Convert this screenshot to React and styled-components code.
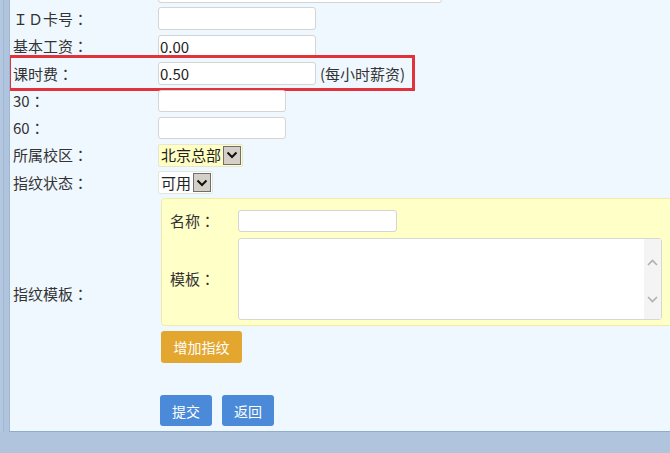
import React from "react";
import styled, { createGlobalStyle } from "styled-components";

const Global = createGlobalStyle`
  html, body { margin: 0; padding: 0; overflow: hidden; }
  body {
    background: #b0c4de;
    font-family: "Noto Sans CJK SC", "Liberation Sans", sans-serif;
    color: #333;
  }
`;

const Page = styled.div`
  width: 670px;
  height: 453px;
  background: #b0c4de;
  display: flex;
  flex-direction: column;
  overflow: hidden;
`;

const Frame = styled.div`
  display: flex;
  height: 432px;
  padding-left: 9px;
  box-shadow: inset 3px 0 0 #b3c8e0, inset 4px 0 0 #9fb7d3;
`;

const Panel = styled.div`
  flex: 1;
  background: #f0f8ff;
  border-left: 1px solid #9db6d2;
  border-bottom: 1px solid #8eaccb;
  overflow: hidden;
  position: relative;
`;

const Form = styled.div`
  display: flex;
  flex-direction: column;
  margin-top: -22px;
`;

const Row = styled.div`
  position: relative;
  display: grid;
  grid-template-columns: 148px 1fr;
  align-items: center;
  height: 27.3px;
`;

const Label = styled.div`
  padding-left: 3px;
  font-size: 15px;
  line-height: 20px;
  color: #333;
  white-space: nowrap;
`;

const Colon = styled.span`
  font-family: "Noto Sans CJK TC", "Noto Sans CJK SC", sans-serif;
`;

const Field = styled.div`
  display: flex;
  align-items: center;
  gap: 4px;
`;

const Input = styled.input`
  box-sizing: border-box;
  width: ${(p) => p.$w}px;
  height: ${(p) => p.$h || 23}px;
  border: 1px solid #d4d4d4;
  border-radius: 3px;
  background: #fff;
  padding: 0 1px;
  font-family: "Noto Sans CJK SC", "Liberation Sans", sans-serif;
  font-size: 15px;
  color: #222;
  outline: none;
`;

const Hint = styled.span`
  font-size: 15px;
  line-height: 20px;
  color: #333;
`;

const Highlight = styled.div`
  position: absolute;
  left: -2px;
  top: -5px;
  width: 407px;
  height: 36px;
  box-sizing: border-box;
  border: 3px solid #e2323a;
  pointer-events: none;
`;

const SelectBox = styled.div`
  box-sizing: border-box;
  display: inline-flex;
  align-items: center;
  height: 23px;
  padding: 0 1px 0 2px;
  gap: 2px;
  background: ${(p) => p.$bg};
  border: 1px solid #e6e6d8;
  border-radius: 2px;
  font-size: 15px;
  color: #222;
  line-height: 20px;
`;

const ArrowBtn = styled.span`
  box-sizing: border-box;
  width: 18px;
  height: 19px;
  background: #d4d0c8;
  border: 1px solid #6f6f6f;
  display: inline-flex;
  align-items: center;
  justify-content: center;
`;

const Chevron = () => (
  <svg width="12" height="8" viewBox="0 0 12 8">
    <path d="M1.5 1.5 L6 6 L10.5 1.5" fill="none" stroke="#111" strokeWidth="2" />
  </svg>
);

const FingerRow = styled.div`
  display: grid;
  grid-template-columns: 148px 1fr;
  align-items: center;
  min-height: 196px;
`;

const FingerField = styled.div`
  display: flex;
  flex-direction: column;
  align-items: flex-start;
  align-self: start;
  padding: 2px 0 0 3px;
`;

const YellowBox = styled.div`
  box-sizing: border-box;
  width: 520px;
  background: #ffffc8;
  border: 1px solid #f2eba6;
  border-radius: 4px;
  padding: 11px 0 5px 8px;
  display: grid;
  grid-template-columns: 68px 1fr;
  row-gap: 6px;
  align-items: center;
`;

const InnerLabel = styled.div`
  font-size: 15px;
  line-height: 20px;
  color: #333;
`;

const TextArea = styled.div`
  box-sizing: border-box;
  width: 424px;
  height: 82px;
  background: #fff;
  border: 1px solid #d8d8d0;
  border-radius: 3px;
  display: flex;
  justify-content: flex-end;
`;

const ScrollBar = styled.div`
  width: 17px;
  background: #f4f4f4;
  display: flex;
  flex-direction: column;
  align-items: center;
  justify-content: space-between;
  padding: 20px 0 16px;
`;

const SmallChev = ({ up }) => (
  <svg width="11" height="7" viewBox="0 0 11 7">
    <path
      d={up ? "M1 6 L5.5 1.5 L10 6" : "M1 1 L5.5 5.5 L10 1"}
      fill="none"
      stroke="#b0b0b0"
      strokeWidth="1.6"
    />
  </svg>
);

const Button = styled.button`
  box-sizing: border-box;
  height: ${(p) => p.$h || 31}px;
  padding: 0 12px;
  border: none;
  border-radius: 3px;
  background: ${(p) => p.$bg};
  color: #fff;
  font-family: "Noto Sans CJK SC", "Liberation Sans", sans-serif;
  font-size: 14px;
  line-height: 20px;
  cursor: pointer;
`;

const AddButton = styled(Button)`
  margin-top: 5px;
  width: 81px;
`;

const SubmitRow = styled.div`
  display: flex;
  gap: 10px;
  padding: 3px 0 0 150px;
`;

const L = ({ children }) => (
  <Label>
    {children}
    <Colon>：</Colon>
  </Label>
);

const IL = ({ children }) => (
  <InnerLabel>
    {children}
    <Colon>：</Colon>
  </InnerLabel>
);

export default function App() {
  return (
    <Page>
      <Global />
      <Frame>
        <Panel>
          <Form>
            <Row>
              <Label></Label>
              <Field>
                <Input $w={284} readOnly />
              </Field>
            </Row>
            <Row>
              <L>ＩＤ卡号</L>
              <Field>
                <Input $w={158} readOnly />
              </Field>
            </Row>
            <Row>
              <L>基本工资</L>
              <Field>
                <Input $w={158} defaultValue="0.00" />
              </Field>
            </Row>
            <Row>
              <L>课时费</L>
              <Field>
                <Input $w={158} defaultValue="0.50" />
                <Hint>(每小时薪资)</Hint>
              </Field>
              <Highlight />
            </Row>
            <Row>
              <L>30</L>
              <Field>
                <Input $w={128} $h={22} readOnly />
              </Field>
            </Row>
            <Row>
              <L>60</L>
              <Field>
                <Input $w={128} $h={22} readOnly />
              </Field>
            </Row>
            <Row>
              <L>所属校区</L>
              <Field>
                <SelectBox $bg="#ffffc4">
                  北京总部
                  <ArrowBtn>
                    <Chevron />
                  </ArrowBtn>
                </SelectBox>
              </Field>
            </Row>
            <Row>
              <L>指纹状态</L>
              <Field>
                <SelectBox $bg="#ffffff">
                  可用
                  <ArrowBtn>
                    <Chevron />
                  </ArrowBtn>
                </SelectBox>
              </Field>
            </Row>
            <FingerRow>
              <L>指纹模板</L>
              <FingerField>
                <YellowBox>
                  <IL>名称</IL>
                  <Input $w={159} $h={22} readOnly />
                  <IL>模板</IL>
                  <TextArea>
                    <ScrollBar>
                      <SmallChev up />
                      <SmallChev />
                    </ScrollBar>
                  </TextArea>
                </YellowBox>
                <AddButton $bg="#e3a62f" $h={32}>
                  增加指纹
                </AddButton>
              </FingerField>
            </FingerRow>
            <SubmitRow>
              <Button $bg="#4a8ad8">提交</Button>
              <Button $bg="#4a8ad8">返回</Button>
            </SubmitRow>
          </Form>
        </Panel>
      </Frame>
    </Page>
  );
}
